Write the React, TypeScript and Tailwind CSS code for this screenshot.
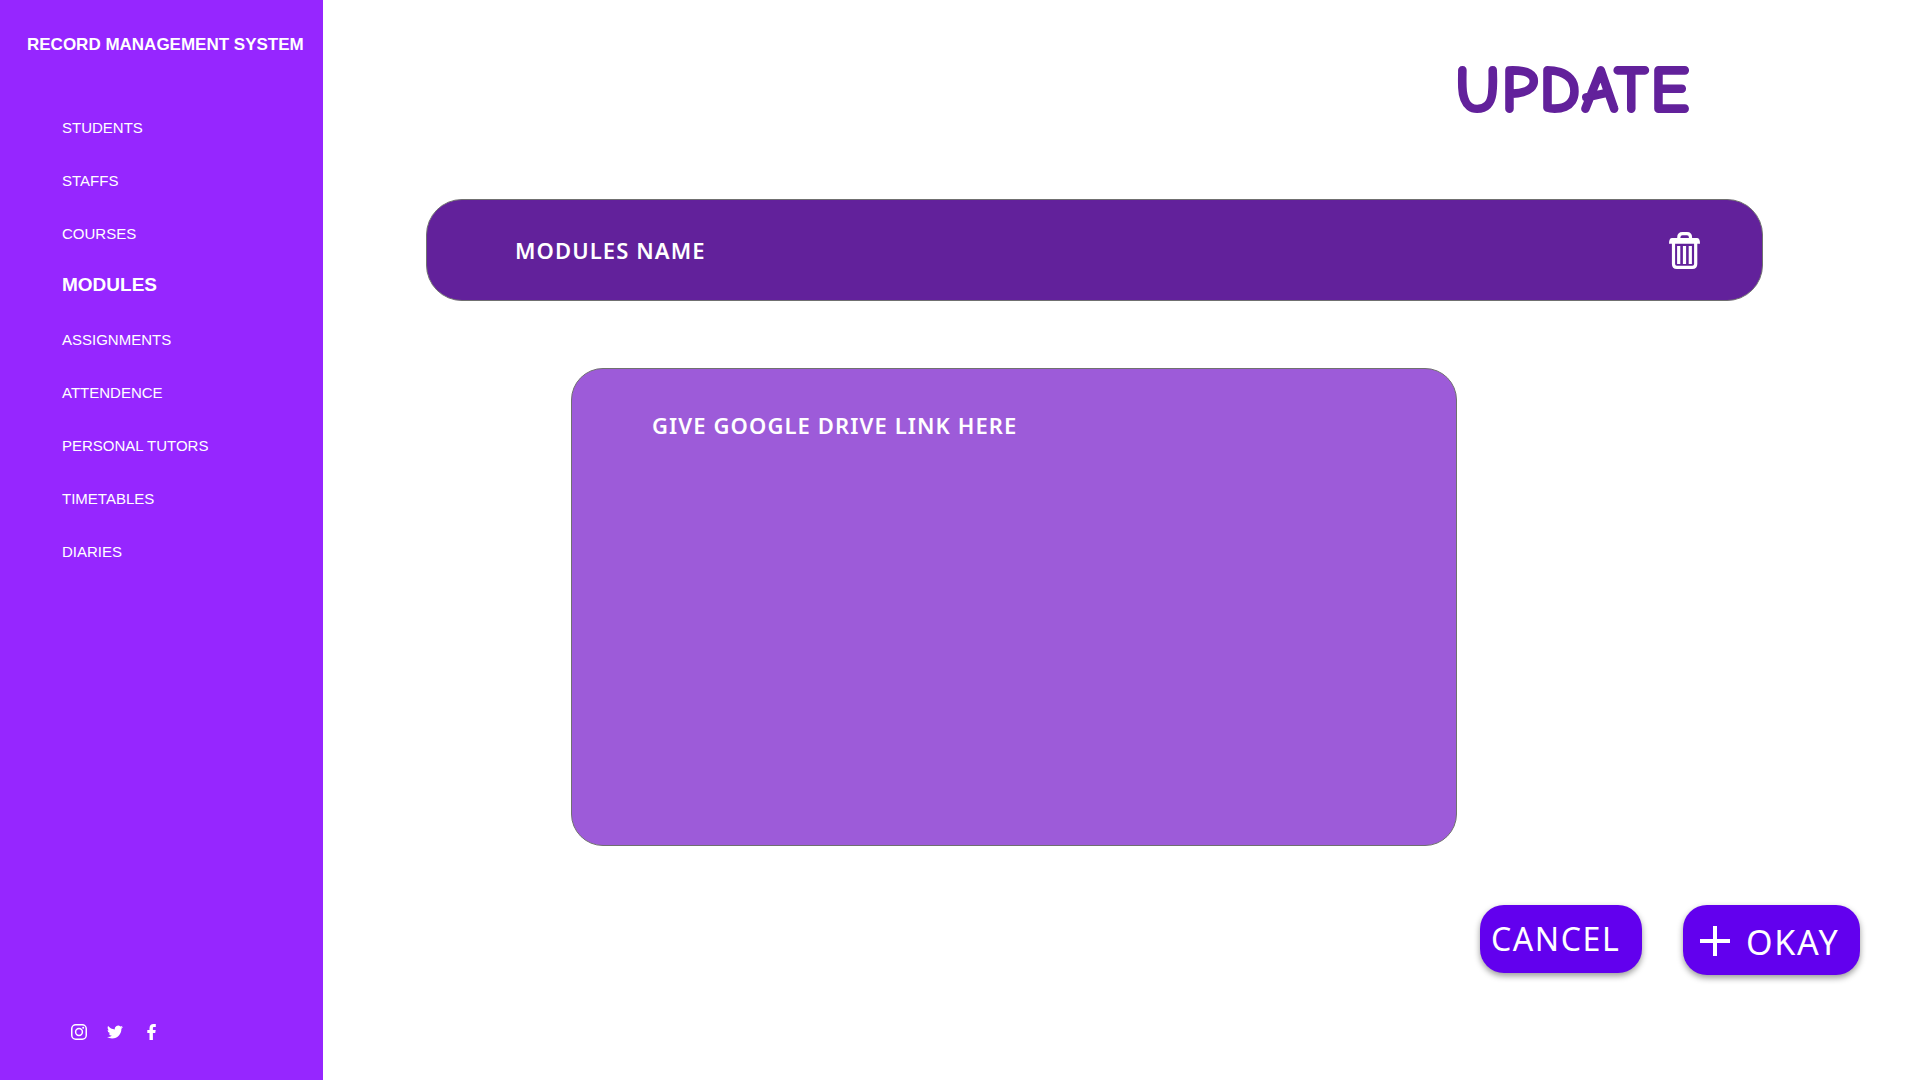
import React from "react";

const links = [
  "STUDENTS",
  "STAFFS",
  "COURSES",
  "MODULES",
  "ASSIGNMENTS",
  "ATTENDENCE",
  "PERSONAL TUTORS",
  "TIMETABLES",
  "DIARIES",
];

function InstagramIcon() {
  return (
    <svg viewBox="0 0 16 16" className="size-4" fill="none" stroke="currentColor" aria-hidden="true">
      <rect x="0.75" y="0.75" width="14.5" height="14.5" rx="4" strokeWidth="1.5" />
      <circle cx="8" cy="8" r="3.4" strokeWidth="1.5" />
      <circle cx="12.2" cy="3.8" r="1" fill="currentColor" stroke="none" />
    </svg>
  );
}

function TwitterIcon() {
  return (
    <svg viewBox="0 2 24 20" className="h-[14px] w-4" fill="currentColor" aria-hidden="true">
      <path d="M23.95 4.57a10 10 0 0 1-2.82.77 4.96 4.96 0 0 0 2.16-2.72c-.95.55-2 .95-3.13 1.18a4.92 4.92 0 0 0-8.38 4.48C7.69 8.1 4.07 6.13 1.64 3.16a4.82 4.82 0 0 0-.67 2.48c0 1.71.87 3.21 2.19 4.1a4.9 4.9 0 0 1-2.23-.62v.06a4.92 4.92 0 0 0 3.95 4.83 5 5 0 0 1-2.21.08 4.94 4.94 0 0 0 4.6 3.42A9.87 9.87 0 0 1 0 19.54a14 14 0 0 0 7.55 2.21c9.05 0 14-7.5 14-13.98 0-.21 0-.42-.02-.63a9.94 9.94 0 0 0 2.42-2.57z" />
    </svg>
  );
}

function FacebookIcon() {
  return (
    <svg viewBox="0 0 10 16" className="h-4 w-[10px]" fill="currentColor" aria-hidden="true">
      <path d="M2.500 16V9H.3V6H2.500V4.200C2.500 1.500 4 0 6.500 0H8.800v2.900H7.200C6.200 2.900 5.900 3.400 5.900 4.200V6H8.700L8.200 9H5.900v7z" />
    </svg>
  );
}

function TrashIcon() {
  return (
    <svg viewBox="0 0 31 37" className="h-[37px] w-[31px]" fill="none" stroke="currentColor" aria-hidden="true">
      <path d="M9.800 7V5.500Q9.800 1.600 13.500 1.600h4.500Q21.500 1.600 21.500 5.500V7" strokeWidth="3.200" />
      <path d="M3 6h25q3 0 3 5.700H0Q0 6 3 6z" fill="currentColor" stroke="none" />
      <path d="M4.500 11v21q0 3.400 3.400 3.400h15.400q3.400 0 3.400-3.400V11" strokeWidth="3.200" />
      <path d="M9.700 14v18M15.500 14v18M21.300 14v18" strokeWidth="3.200" />
    </svg>
  );
}

export default function App() {
  return (
    <div className="flex min-h-screen bg-white font-['Noto_Sans',sans-serif]">
      <aside className="flex w-[323px] shrink-0 flex-col bg-[#9626ff] font-['Liberation_Sans',Arial,sans-serif] text-white">
        <p className="pt-[33px] pl-[27px] text-[17px] leading-6 font-bold whitespace-nowrap">
          RECORD MANAGEMENT SYSTEM
        </p>
        <nav className="mt-[45px] flex flex-col pl-[62px]">
          {links.map((label) => (
            <a
              key={label}
              href="#"
              aria-current={label === "MODULES" ? "page" : undefined}
              className={
                label === "MODULES"
                  ? "flex h-[53px] items-center pb-1 text-[19px] font-bold"
                  : "flex h-[53px] items-center text-[15px]"
              }
            >
              {label}
            </a>
          ))}
        </nav>
        <div className="mt-auto flex items-center gap-5 pb-10 pl-[71px]">
          <a href="#" aria-label="Instagram"><InstagramIcon /></a>
          <a href="#" aria-label="Twitter"><TwitterIcon /></a>
          <a href="#" aria-label="Facebook" className="pl-1"><FacebookIcon /></a>
        </div>
      </aside>

      <main className="flex min-w-0 flex-1 flex-col">
        <h1 className="mt-[49px] mr-[229px] self-end font-['Comic_Sans_MS','Comic_Neue',Lato,sans-serif] text-[66px] leading-[84px] font-bold tracking-wide text-[#62219b] [-webkit-text-stroke:2px_#62219b]">
          UPDATE
        </h1>

        <section className="mt-[66px] mr-[157px] ml-[103px] flex h-[102px] items-center justify-between rounded-[36px] border border-[#707070] bg-[#62219b] pr-[62px] pl-[88px] text-white">
          <h2 className="text-[22px] font-semibold tracking-wider">MODULES NAME</h2>
          <button type="button" aria-label="Delete module"><TrashIcon /></button>
        </section>

        <textarea
          aria-label="Google Drive link"
          placeholder="GIVE GOOGLE DRIVE LINK HERE"
          className="mt-[67px] mr-[463px] ml-[248px] block h-[478px] resize-none rounded-[32px] border border-[#707070] bg-[#9d5bd9] px-20 py-10 text-[22px] leading-8 font-semibold tracking-wider text-white placeholder:text-white placeholder:opacity-100"
        />

        <div className="mt-[59px] mr-[60px] flex items-start gap-[41px] self-end text-white">
          <button
            type="button"
            className="flex h-[68px] w-[162px] items-center rounded-3xl bg-[#6200ee] pl-[11px] text-[32px] leading-none tracking-wider shadow-[0_3px_6px_rgba(0,0,0,0.4)]"
          >
            CANCEL
          </button>
          <button
            type="button"
            className="flex h-[70px] w-[177px] items-center gap-4 rounded-3xl bg-[#6200ee] pt-[2px] pl-[17px] text-[34px] leading-none tracking-wider shadow-[0_3px_6px_rgba(0,0,0,0.4)]"
          >
            <svg viewBox="0 0 30 30" className="size-[30px] shrink-0" stroke="currentColor" strokeWidth="4" aria-hidden="true">
              <path d="M15 0v30M0 15h30" />
            </svg>
            <span className="pt-[2px]">OKAY</span>
          </button>
        </div>
      </main>
    </div>
  );
}
